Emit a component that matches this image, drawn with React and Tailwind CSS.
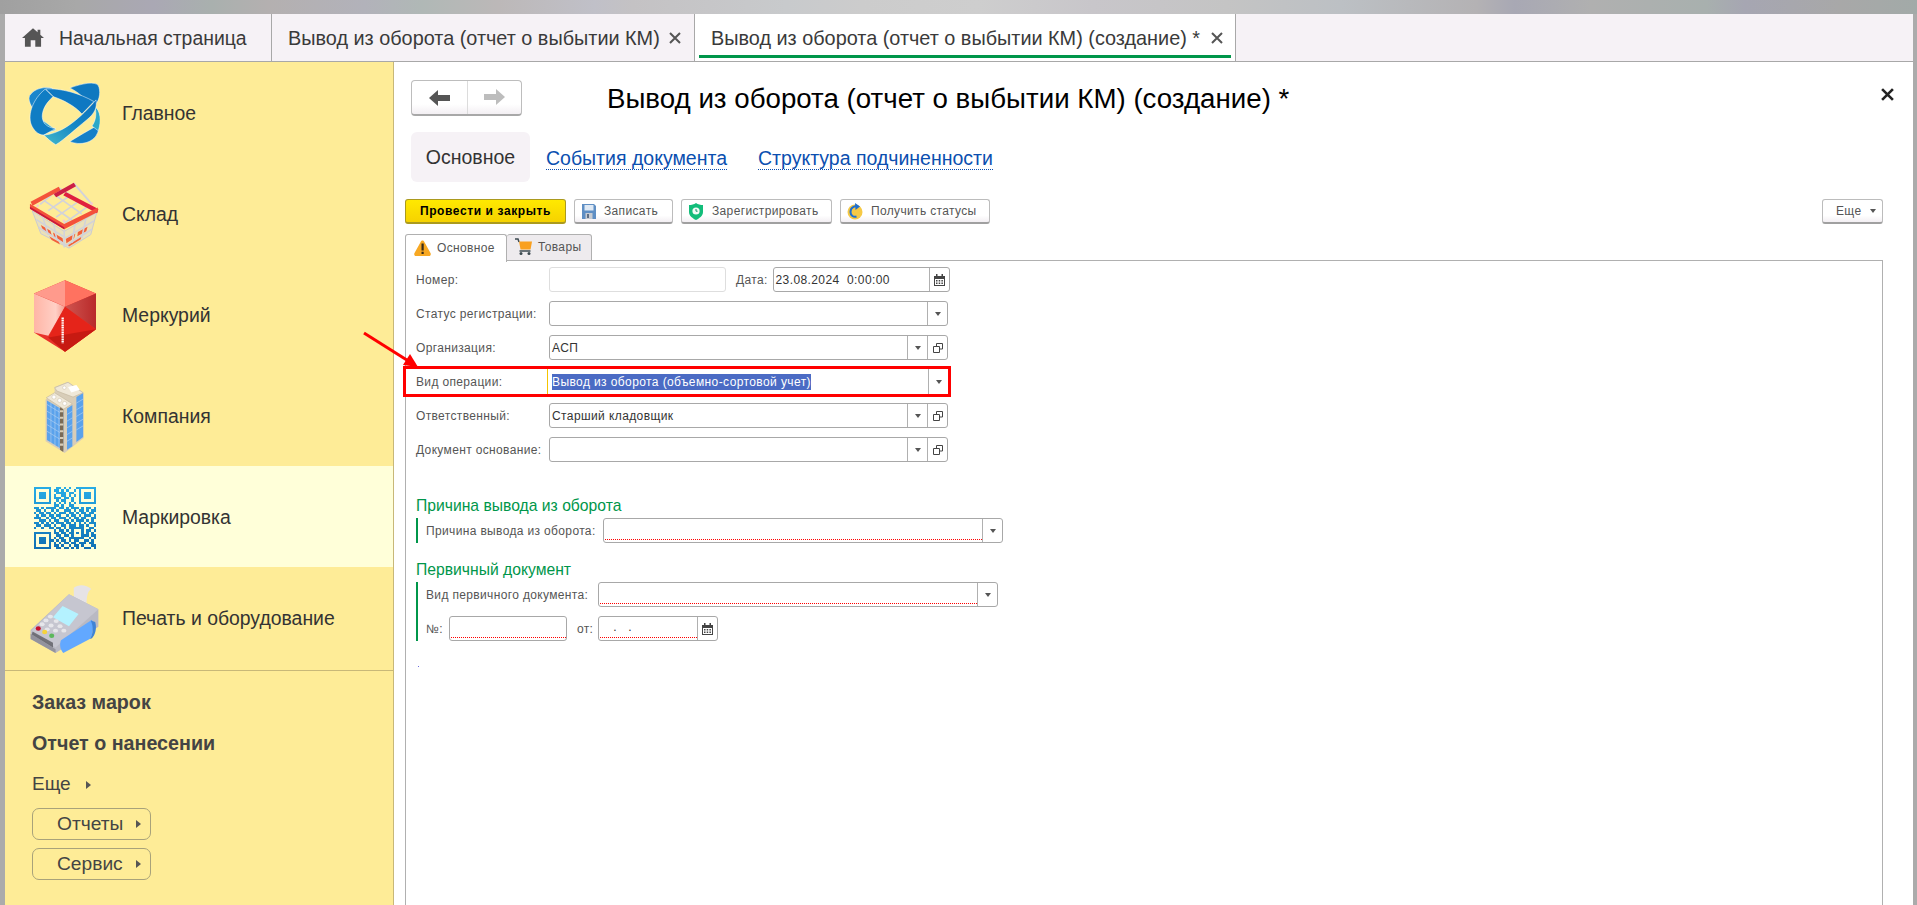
import React from "react";

const qrRows = [
  "1111111001101010011111111",
  "1000001011010100101000001",
  "1011101001111011001011101",
  "1011101010011010101011101",
  "1011101011101101001011101",
  "1000001001011001001000001",
  "1111111010101010101111111",
  "0000000011010011000000000",
  "1101011110110101110101101",
  "0110100101001110101101011",
  "1011011010111011010110110",
  "0101101101100101101011101",
  "1110010110111010110110011",
  "0011101011001101011101010",
  "1101010101110110101010111",
  "0110111010011011101101001",
  "1001001101101011111100110",
  "0000000010110101000101101",
  "1111111011011011010101010",
  "1000001001101101000111011",
  "1011101010110011111100101",
  "1011101101011010110011010",
  "1011101010101101101110110",
  "1000001011010010110100011",
  "1111111001101101010011101",
];

const OrbitIcon = () => (
  <svg width="72" height="64" viewBox="28 35 212 190">
    <defs>
      <linearGradient id="orbitA" x1="0" y1="1" x2="1" y2="0">
        <stop offset="0" stopColor="#45b9c9" />
        <stop offset="0.5" stopColor="#1487c6" />
        <stop offset="1" stopColor="#0b70bd" />
      </linearGradient>
    </defs>
    <g stroke="#fff" strokeWidth="1.5">
      <path d="M30 75C45 52 75 48 98 53L62 98L42 118C30 100 25 85 30 75Z" fill="#1a86cc" />
      <path d="M150 52C190 38 225 32 235 45C242 60 240 85 228 100L195 88C185 72 165 60 150 52Z" fill="#0f78c0" />
      <path d="M150 212C180 226 222 216 233 186C238 172 236 166 225 168L190 188Z" fill="#1580c8" />
      <path d="M225 108C241 120 245 150 235 180L216 166C228 150 230 128 225 108Z" fill="#2aa8c8" />
      <path d="M68 148L108 178L88 184Z" fill="#2aa0c4" />
      <path d="M78 55C120 52 180 68 222 93L186 130C165 106 130 88 100 78Z" fill="#0e78c2" />
      <path d="M76 56C40 85 24 130 34 160C42 180 55 192 72 193L108 173C82 172 64 155 68 130C72 105 88 90 100 78Z" fill="#0f7dc4" />
      <path d="M72 193C120 188 165 160 228 88C232 110 225 128 200 148C170 172 135 205 108 222C92 212 82 202 72 193Z" fill="url(#orbitA)" />
    </g>
  </svg>
);

const BasketIcon = () => (
  <svg width="74" height="73" viewBox="25 322 222 220">
    <path d="M35 420L135 485L237 425L218 495L150 537L62 492Z" fill="#d6d6dc" fillOpacity="0.5" stroke="#cacad2" strokeWidth="3" />
    <g fill="#f2603a">
      <path d="M62 465L92 483L96 497L68 480Z" />
      <path d="M100 488L130 506L132 520L104 503Z" />
      <path d="M140 508L170 492L166 506L142 522Z" />
      <path d="M178 487L208 470L204 484L176 500Z" />
      <path d="M88 500L118 517L122 526L96 512Z" />
      <path d="M146 525L190 500L186 510L150 532Z" />
    </g>
    <g stroke="#d2d2da" strokeWidth="5" fill="none">
      <path d="M60 400L120 350L235 420M85 420L150 375M110 440L175 395M135 460L205 410M75 390L160 450M105 370L190 430" />
      <path d="M65 430L85 495M100 452L112 510M135 475V535M170 455L160 520M205 435L190 505" />
      <path d="M48 448L140 505L228 452M55 472L142 528L222 478" />
      <path d="M165 335L222 400" strokeWidth="6" />
    </g>
    <path d="M30 392L118 345L124 356L36 405Z" fill="#f4533a" />
    <path d="M102 368L165 333L172 344L110 378Z" fill="#cc1f46" />
    <path d="M140 362L242 415L238 428L132 372Z" fill="#e0203e" />
    <path d="M28 398L135 462L240 410V424L135 478L28 414Z" fill="#f4513a" />
    <path d="M28 408L135 472L135 478L28 414Z" fill="#c8183f" />
    <circle cx="52" cy="405" r="4" fill="#f6c8d0" />
    <circle cx="134" cy="452" r="4" fill="#f6c8d0" />
    <circle cx="221" cy="398" r="4" fill="#f6c8d0" />
  </svg>
);

const CubeIcon = () => (
  <svg width="62" height="72" viewBox="42 28 186 215">
    <defs>
      <linearGradient id="cubeA" x1="0" y1="0" x2="1" y2="0">
        <stop offset="0" stopColor="#ffb5a6" />
        <stop offset="0.7" stopColor="#ffd0c6" />
        <stop offset="1" stopColor="#f49a8c" />
      </linearGradient>
      <linearGradient id="cubeB" x1="0" y1="0" x2="1" y2="0">
        <stop offset="0" stopColor="#cf5550" />
        <stop offset="1" stopColor="#b92a2a" />
      </linearGradient>
    </defs>
    <path d="M135 28L228 68V175L135 243L42 185V68Z" fill="#e8322a" />
    <path d="M135 28L42 68L100 92L135 108Z" fill="#ff9a8c" />
    <path d="M135 28L228 68L135 108Z" fill="#ff7260" />
    <path d="M42 68L135 108L85 195L42 185Z" fill="url(#cubeA)" />
    <path d="M135 108L228 68V175Z" fill="url(#cubeB)" />
    <path d="M135 108L228 175L135 243L85 200Z" fill="#e5241a" />
    <path d="M85 200L228 175L135 243Z" fill="#c71a12" />
    <path d="M128 140V218" stroke="#fff" strokeWidth="7" strokeDasharray="5 2" />
  </svg>
);

const BuildingIcon = () => (
  <svg width="40" height="72" viewBox="77 330 118 215">
    <path d="M105 348L145 332L192 365V500L135 545L78 510V385L105 372Z" fill="#d8cdb8" />
    <path d="M82 388L131 417V537L82 506Z" fill="#5aa2ec" />
    <path d="M142 412L158 402V525L142 535Z" fill="#5aa2ec" />
    <path d="M170 378L190 366V497L170 512Z" fill="#5aa2ec" />
    <path d="M82 400L131 430M82 420L131 450M82 440L131 470M82 460L131 490M82 480L131 510M94 396V515M106 404V523M118 411V530" stroke="#c8dcf2" strokeWidth="1.5" />
    <path d="M142 430L158 420M142 450L158 440M142 470L158 460M142 490L158 480M142 510L158 500M170 396L190 384M170 416L190 404M170 436L190 424M170 456L190 444M170 476L190 464" stroke="#c8dcf2" strokeWidth="1.5" />
    <path d="M121 403H131V542L121 535Z" fill="#7a6a55" />
    <path d="M121 420h10M121 440h10M121 460h10M121 480h10M121 500h10M121 520h10" stroke="#d8cdb8" strokeWidth="6" />
    <path d="M80 380L105 365L158 398L132 414Z" fill="#efe8d8" stroke="#c5b8a0" strokeWidth="2" />
    <path d="M105 350L145 334L190 365L160 378L112 360Z" fill="#efe8d8" stroke="#c5b8a0" strokeWidth="2" />
    <path d="M145 348L170 342L180 356L155 364Z" fill="#fff" />
    <circle cx="103" cy="378" r="6" fill="#fff" stroke="#b5a890" />
    <circle cx="120" cy="388" r="6" fill="#fff" stroke="#b5a890" />
    <circle cx="135" cy="397" r="6" fill="#fff" stroke="#b5a890" />
    <circle cx="134" cy="350" r="5" fill="#fff" stroke="#b5a890" />
  </svg>
);

const QrIcon = () => (
  <svg width="62" height="62" viewBox="0 0 25 25" shapeRendering="crispEdges">
    <defs>
      <linearGradient id="qrA" x1="0" y1="0" x2="0" y2="1" gradientUnits="objectBoundingBox">
        <stop offset="0" stopColor="#28ace6" />
        <stop offset="1" stopColor="#1170b4" />
      </linearGradient>
    </defs>
    <g fill="url(#qrA)">
      <path
        d={qrRows
          .map((row, y) =>
            row
              .split("")
              .map((c, x) => (c === "1" ? `M${x} ${y}h1v1h-1z` : ""))
              .join("")
          )
          .join("")}
      />
    </g>
  </svg>
);

const PosIcon = () => (
  <svg width="74" height="73" viewBox="25 305 222 218">
    <path d="M165 318C180 305 205 308 220 322C205 330 205 355 205 380L165 355Z" fill="#e6e3e6" />
    <path d="M30 450L150 338L242 385V440L108 522L30 478Z" fill="#b9b9c3" />
    <path d="M30 462L108 510V522L30 478Z" fill="#93939d" />
    <path d="M150 338L242 385L108 505L30 455Z" fill="#c6c6d0" />
    <path d="M100 410L130 375L180 400L150 438Z" fill="#b4f2ff" />
    <g fill="#e6e6ea">
      <ellipse cx="92" cy="408" rx="8" ry="6" />
      <ellipse cx="78" cy="420" rx="8" ry="6" />
      <ellipse cx="110" cy="422" rx="8" ry="6" />
      <ellipse cx="66" cy="432" rx="8" ry="6" />
      <ellipse cx="94" cy="436" rx="8" ry="6" />
      <ellipse cx="122" cy="438" rx="8" ry="6" />
      <ellipse cx="82" cy="448" rx="8" ry="6" />
      <ellipse cx="108" cy="452" rx="8" ry="6" />
      <ellipse cx="134" cy="452" rx="8" ry="6" />
    </g>
    <ellipse cx="54" cy="445" rx="8" ry="7" fill="#c8102e" />
    <ellipse cx="74" cy="456" rx="8" ry="7" fill="#f5d33c" />
    <ellipse cx="96" cy="468" rx="8" ry="7" fill="#5cb85c" />
    <path d="M34 464L100 505V490L36 455Z" fill="#55555c" opacity="0.75" />
    <path d="M125 482L222 418C228 440 225 465 215 478L132 522C122 510 120 495 125 482Z" fill="#62a8ff" />
    <path d="M218 420L232 425C238 445 232 465 222 476L215 478C225 465 228 440 218 420Z" fill="#3f83d6" />
  </svg>
);

const HomeIcon = () => (
  <svg width="22" height="19" viewBox="0 0 24 20" fill="#555">
    <path d="M12 0L0 10.5h3.2V20h6.3v-7h5v7h6.3v-9.5H24l-4-3.6V1.5h-3v2.7z" />
  </svg>
);

const CloseIcon = ({ color = "#555", size = 12, width = 2 }) => (
  <svg width={size} height={size} viewBox="0 0 12 12" stroke={color} strokeWidth={width} className="shrink-0">
    <path d="M1 1L11 11M11 1L1 11" />
  </svg>
);

const DownTri = () => <span className="block w-0 h-0 border-x-[3.5px] border-x-transparent border-t-[4px] border-t-[#555]"></span>;
const RightTri = () => <span className="block w-0 h-0 border-y-[4px] border-y-transparent border-l-[5px] border-l-[#555]"></span>;

const CalendarIcon = () => (
  <svg width="11" height="12" viewBox="0 0 11 12">
    <path d="M0 2h11v10H0z" fill="#444" />
    <path d="M2 0h1.5v3H2zM7.5 0H9v3H7.5z" fill="#444" />
    <path d="M1 5h9v6H1z" fill="#fff" />
    <path d="M2 6h1.5v1.5H2zM4.7 6h1.5v1.5H4.7zM7.4 6h1.5v1.5H7.4zM2 8.5h1.5V10H2zM4.7 8.5h1.5V10H4.7zM7.4 8.5h1.5V10H7.4z" fill="#444" />
  </svg>
);

const OpenIcon = () => (
  <svg width="10" height="10" viewBox="0 0 10 10" fill="none" stroke="#444" strokeWidth="1">
    <path d="M3.5 3.5V.5h6v5.5h-3" />
    <path d="M.5 3.5h6v6h-6z" />
  </svg>
);

const SaveIcon = () => (
  <svg width="14" height="15" viewBox="0 0 14 15">
    <path d="M0 0h12l2 2v13H0z" fill="#5f8fc4" />
    <path d="M2.5 1h9v5.5h-9z" fill="#dfe9f4" />
    <path d="M3.5 9h7v6h-7z" fill="#c8ccd2" />
    <path d="M5 10h2v4H5z" fill="#5f6f85" />
  </svg>
);

const ShieldIcon = () => (
  <svg width="14" height="17" viewBox="0 0 14 17">
    <path d="M7 0C9 1.4 11.500 2 14 2V9C14 13 10 15.500 7 17C4 15.500 0 13 0 9V2C2.500 2 5 1.400 7 0Z" fill="#12bd7a" />
    <circle cx="7" cy="8" r="3.600" fill="#f2fbf6" />
    <path d="M7 6v2.200h1.600" stroke="#12926a" strokeWidth="1" fill="none" />
  </svg>
);

const RefreshIcon = () => (
  <svg width="16" height="18" viewBox="0 0 16 18">
    <circle cx="8" cy="10" r="7.500" fill="#f6c945" />
    <path d="M10.800 5C8 3.400 3.500 5 3.500 10C3.500 13.500 6.500 15.500 9.500 14.500" fill="none" stroke="#1f6fd0" strokeWidth="2" />
    <path d="M8 1L13 4.500L8.500 8Z" fill="#1f6fd0" />
  </svg>
);

const WarnIcon = () => (
  <svg width="17" height="16" viewBox="0 0 17 16">
    <path d="M8.500 0.500C9.500 0.500 10 1.200 10.500 2.200L16.500 13C17.200 14.500 16.500 16 15 16H2C0.500 16 -0.200 14.500 0.500 13L6.500 2.200C7 1.200 7.500 0.500 8.500 0.500Z" fill="#f7a823" />
    <path d="M7.500 3.500h2.200v7H7.500zM7.500 11.800h2.200V14H7.500z" fill="#3a2c18" />
  </svg>
);

const CartIcon = () => (
  <svg width="17" height="17" viewBox="0 0 17 17">
    <path d="M0 1h3l1 3" stroke="#3c4a50" strokeWidth="1.500" fill="none" />
    <path d="M4 3.500h13l-1.500 8H5.500z" fill="#f9a01f" />
    <path d="M4.500 13h11" stroke="#3c4a50" strokeWidth="1.500" />
    <circle cx="6" cy="15.500" r="1.500" fill="#3c4a50" />
    <circle cx="14" cy="15.500" r="1.500" fill="#3c4a50" />
  </svg>
);

const ArrowLeft = ({ color }) => (
  <svg width="21" height="16" viewBox="0 0 21 16" fill={color}>
    <path d="M0 8L9 0V5H21V11H9V16Z" />
  </svg>
);

const NavItem = ({ icon, label, active }) => (
  <div className={`h-[101px] pt-[2px] flex items-center ${active ? "bg-[#ffffd9]" : ""}`}>
    <div className="w-[117px] pl-[24px] pr-[22px] flex justify-center shrink-0">{icon}</div>
    <span className="text-[19.4px] text-[#333]">{label}</span>
  </div>
);

const SideButton = ({ label }) => (
  <div className="w-[119px] h-[32px] flex items-center border border-[#a8a27a] rounded-[7px] pl-[24px] text-[19.2px] text-[#444]">
    <span className="w-[79px]">{label}</span>
    <RightTri />
  </div>
);

const Cmd = ({ icon, label, w, pl }) => (
  <div
    className={`${w} ${pl} h-[25px] flex items-center shrink-0 rounded-[3px] border border-[#bcbcbc] border-b-2 border-b-[#a0a0a0] bg-[linear-gradient(#fff_70%,#f3eff3)] text-[12px] tracking-[0.35px] text-[#555]`}
  >
    {icon}
    <span>{label}</span>
  </div>
);

const SideBtn = ({ children }) => (
  <span className="w-[20px] self-stretch flex items-center justify-center border-l border-[#b0b0b0] shrink-0">{children}</span>
);

const Box = ({ w, text, down, open, cal, req, faint }) => (
  <div className={`${w} h-[25px] flex items-stretch shrink-0 rounded-[3px] border ${faint ? "border-[#dedede]" : "border-[#a8a8a8]"} bg-white`}>
    <div className={`flex-1 min-w-0 pl-[2px] flex items-center text-[12px] tracking-[0.4px] text-[#333] whitespace-pre ${req ? "mb-[2px] ml-[1px] border-b border-dotted border-b-[#f00]" : ""}`}>
      {text}
    </div>
    {down && <SideBtn><DownTri /></SideBtn>}
    {open && <SideBtn><OpenIcon /></SideBtn>}
    {cal && <SideBtn><CalendarIcon /></SideBtn>}
  </div>
);

const Label = ({ w, children }) => (
  <span className={`${w} shrink-0 text-[12px] tracking-[0.35px] text-[#555] whitespace-nowrap`}>{children}</span>
);

const Row = ({ label, children }) => (
  <div className="flex items-center h-[25px] mb-[9px]">
    <Label w="w-[133px]">{label}</Label>
    {children}
  </div>
);

const Heading = ({ children }) => (
  <div className="h-[20px] mb-[2px] flex items-center text-[15.7px] text-[#00964a] whitespace-nowrap">{children}</div>
);

const App = () => {
  return (
    <div className="relative w-[1917px] h-[905px] overflow-hidden flex flex-col bg-white font-['Liberation_Sans',Arial,sans-serif]">
      <div className="h-[14px] shrink-0 bg-[linear-gradient(90deg,#a0a0a0_0%,#a8a8a8_4%,#aaa8b4_8%,#a9b0ae_11%,#b4b0b0_14%,#b2b2ba_19%,#b0b8b6_22%,#bcb8b8_26%,#c0c0c8_31%,#c4c2c4_33%,#c8cacc_41%,#cccccc_45%,#cecece_51%,#c8c6ca_57%,#c4c4c4_64%,#bcc0c4_70%,#b4b2b4_77%,#a8a8b4_79%,#b0b0b0_83%,#a8b0ae_89%,#a6a6b2_91%,#a8a8a8_96%,#a2aaa8_100%)]"></div>

      <div className="flex-1 min-h-0 flex flex-col border-l-[5px] border-r-[4px] border-[#ababab]">
        {/* Open windows */}
        <div className="h-[48px] shrink-0 flex bg-[#f6f2f6] border-b border-[#a8a8a8] text-[19.85px] text-[#3a3a3a]">
          <div className="w-[267px] flex items-center pl-[17px] gap-[15px] border-r border-[#a8a8a8]">
            <HomeIcon />
            <span className="pt-[2px] text-[19.4px]">Начальная страница</span>
          </div>
          <div className="w-[423px] flex items-center pl-[16px] gap-[9px] border-r border-[#a8a8a8] whitespace-nowrap">
            <span className="pt-[2px]">Вывод из оборота (отчет о выбытии КМ)</span>
            <CloseIcon />
          </div>
          <div className="relative w-[541px] flex items-center pl-[16px] bg-white border-r border-[#a8a8a8] whitespace-nowrap">
            <span className="pt-[2px]">Вывод из оборота (отчет о выбытии КМ) (создание) *</span>
            <span className="ml-[11px]"><CloseIcon /></span>
            <div className="absolute left-[4px] right-[4px] bottom-[3px] h-[3px] bg-[#00964a]"></div>
          </div>
        </div>

        <div className="flex-1 min-h-0 flex">
          {/* Sections */}
          <div className="w-[389px] shrink-0 bg-[#feec97] border-r border-[#c8b878]">
            <div className="pb-[2px] border-b border-[#c8b878]">
              <NavItem icon={<OrbitIcon />} label="Главное" />
              <NavItem icon={<BasketIcon />} label="Склад" />
              <NavItem icon={<CubeIcon />} label="Меркурий" />
              <NavItem icon={<BuildingIcon />} label="Компания" />
              <NavItem icon={<QrIcon />} label="Маркировка" active />
              <NavItem icon={<PosIcon />} label="Печать и оборудование" />
            </div>
            <div className="pl-[27px] pt-[11px]">
              <div className="h-[41px] flex items-center text-[19.7px] font-bold text-[#444]">Заказ марок</div>
              <div className="h-[41px] flex items-center text-[19.7px] font-bold text-[#444]">Отчет о нанесении</div>
              <div className="h-[41px] flex items-center gap-[15px] text-[19px] text-[#444]">
                Еще
                <RightTri />
              </div>
              <div className="mt-[3px] flex flex-col gap-[8px]">
                <SideButton label="Отчеты" />
                <SideButton label="Сервис" />
              </div>
            </div>
          </div>

          {/* Form */}
          <div className="flex-1 min-w-0 flex flex-col pl-[11px] pr-[30px]">
            <div className="h-[36px] mt-[18px] shrink-0 flex items-center">
              <div className="ml-[6px] w-[111px] h-[36px] flex rounded-[4px] border border-[#bdbdbd] border-b-2 border-b-[#a8a8a8] bg-[linear-gradient(#fff_70%,#f3eff3)]">
                <div className="w-[56px] flex items-center justify-center border-r border-[#dcdcdc]">
                  <ArrowLeft color="#555" />
                </div>
                <div className="flex-1 flex items-center justify-center rotate-180">
                  <ArrowLeft color="#bdbdbd" />
                </div>
              </div>
              <h1 className="ml-[85px] pt-[2px] text-[27.7px] text-black whitespace-nowrap">Вывод из оборота (отчет о выбытии КМ) (создание) *</h1>
              <span className="ml-auto -mr-[11px] mb-[8px]"><CloseIcon color="#222" size={13} width={2.4} /></span>
            </div>

            <div className="h-[50px] mt-[16px] ml-[6px] shrink-0 flex items-center text-[19.5px]">
              <div className="w-[119px] h-full pt-[2px] flex items-center justify-center rounded-[6px] bg-[#f6f2f6] text-[#333]">Основное</div>
              <span className="ml-[16px] mt-[2px] text-[#0b4fb0] border-b border-dotted border-[#0b4fb0] leading-[22px]">События документа</span>
              <span className="ml-[31px] mt-[2px] text-[#0b4fb0] border-b border-dotted border-[#0b4fb0] leading-[22px]">Структура подчиненности</span>
            </div>

            <div className="h-[25px] mt-[17px] shrink-0 flex items-center gap-[8px]">
              <div className="w-[161px] h-[25px] flex items-center justify-center shrink-0 rounded-[3px] border border-[#ab9a1e] border-b-2 bg-[linear-gradient(#ffe900,#f6d200)] text-[12px] tracking-[0.6px] font-bold text-black">
                Провести и закрыть
              </div>
              <Cmd w="w-[99px]" pl="pl-[7px] gap-[8px]" icon={<SaveIcon />} label="Записать" />
              <Cmd w="w-[151px]" pl="pl-[7px] gap-[9px]" icon={<ShieldIcon />} label="Зарегистрировать" />
              <Cmd w="w-[150px]" pl="pl-[6px] gap-[8px]" icon={<RefreshIcon />} label="Получить статусы" />
              <div className="ml-auto w-[61px] h-[25px] pl-[13px] gap-[9px] flex items-center rounded-[3px] border border-[#bcbcbc] border-b-2 border-b-[#a0a0a0] bg-[linear-gradient(#fff_70%,#f3eff3)] text-[12px] tracking-[0.35px] text-[#555]">
                Еще
                <DownTri />
              </div>
            </div>

            <div className="h-[27px] mt-[10px] -mb-px shrink-0 flex items-stretch text-[12px] tracking-[0.35px] text-[#555] relative z-10">
              <div className="w-[102px] h-[28px] pl-[8px] pb-[2px] gap-[6px] flex items-center bg-white border border-b-0 border-[#b0b0b0] rounded-t-[3px]">
                <WarnIcon />
                Основное
              </div>
              <div className="w-[85px] h-[27px] pl-[8px] pb-[2px] gap-[6px] flex items-center bg-[#eeebee] border border-l-0 border-[#b0b0b0] rounded-t-[3px]">
                <CartIcon />
                Товары
              </div>
            </div>

            <div className="flex-1 min-h-0 pt-[6px] pl-[10px] border border-b-0 border-[#b0b0b0]">
              <div className="flex items-center h-[25px] mb-[9px]">
                <Label w="w-[133px]">Номер:</Label>
                <Box w="w-[177px]" faint />
                <span className="ml-[10px] w-[36.500px] shrink-0 text-[12px] tracking-[0.35px] text-[#555]">Дата:</span>
                <Box w="w-[177px]" text="23.08.2024  0:00:00" cal />
              </div>
              <Row label="Статус регистрации:">
                <Box w="w-[399px]" down />
              </Row>
              <Row label="Организация:">
                <Box w="w-[399px]" text="АСП" down open />
              </Row>

              <div className="relative flex items-center h-[25px] mb-[9px]">
                <Label w="w-[131px]">Вид операции:</Label>
                <div className="w-[401px] h-[25px] flex items-stretch border-l border-l-[#f5c400]">
                  <div className="flex-1 pl-[4px] flex items-center text-[12px] tracking-[0.4px]">
                    <span className="h-[16px] leading-[16px] bg-[#4b6bc4] text-white">Вывод из оборота (объемно-сортовой учет)</span>
                  </div>
                  <SideBtn><DownTri /></SideBtn>
                </div>
                <div className="absolute -left-[13px] -top-[3px] w-[548px] h-[31px] border-[3px] border-[#f00] pointer-events-none"></div>
              </div>

              <Row label="Ответственный:">
                <Box w="w-[399px]" text="Старший кладовщик" down open />
              </Row>
              <Row label="Документ основание:">
                <Box w="w-[399px]" down open />
              </Row>

              <div className="mt-[34px]">
                <Heading>Причина вывода из оборота</Heading>
                <div className="flex items-center h-[25px] pl-[8px] border-l-2 border-[#00964a]">
                  <Label w="w-[177px]">Причина вывода из оборота:</Label>
                  <Box w="w-[400px]" down req />
                </div>
              </div>

              <div className="mt-[17px]">
                <Heading>Первичный документ</Heading>
                <div className="flex flex-col gap-[9px] pl-[8px] border-l-2 border-[#00964a]">
                  <div className="flex items-center h-[25px]">
                    <Label w="w-[172px]">Вид первичного документа:</Label>
                    <Box w="w-[400px]" down req />
                  </div>
                  <div className="flex items-center h-[25px]">
                    <Label w="w-[23px]">№:</Label>
                    <Box w="w-[118px]" req />
                    <span className="ml-[10px] w-[21px] text-[12px] tracking-[0.35px] text-[#555]">от:</span>
                    <Box w="w-[120px]" text="   .   ." cal req />
                  </div>
                </div>
              </div>

              <div className="mt-[25px] ml-[2px] w-[1px] h-[1px] bg-[#6a6ae0]"></div>
            </div>
          </div>
        </div>
      </div>

      {/* Pointer drawn over the screenshot */}
      <svg className="absolute left-[360px] top-[328px] pointer-events-none" width="62" height="42" viewBox="0 0 62 42">
        <path d="M4 5L50 34" stroke="#f00" strokeWidth="3" />
        <path d="M58 39L43 37L50 26Z" fill="#f00" />
      </svg>
    </div>
  );
};

export default App;
